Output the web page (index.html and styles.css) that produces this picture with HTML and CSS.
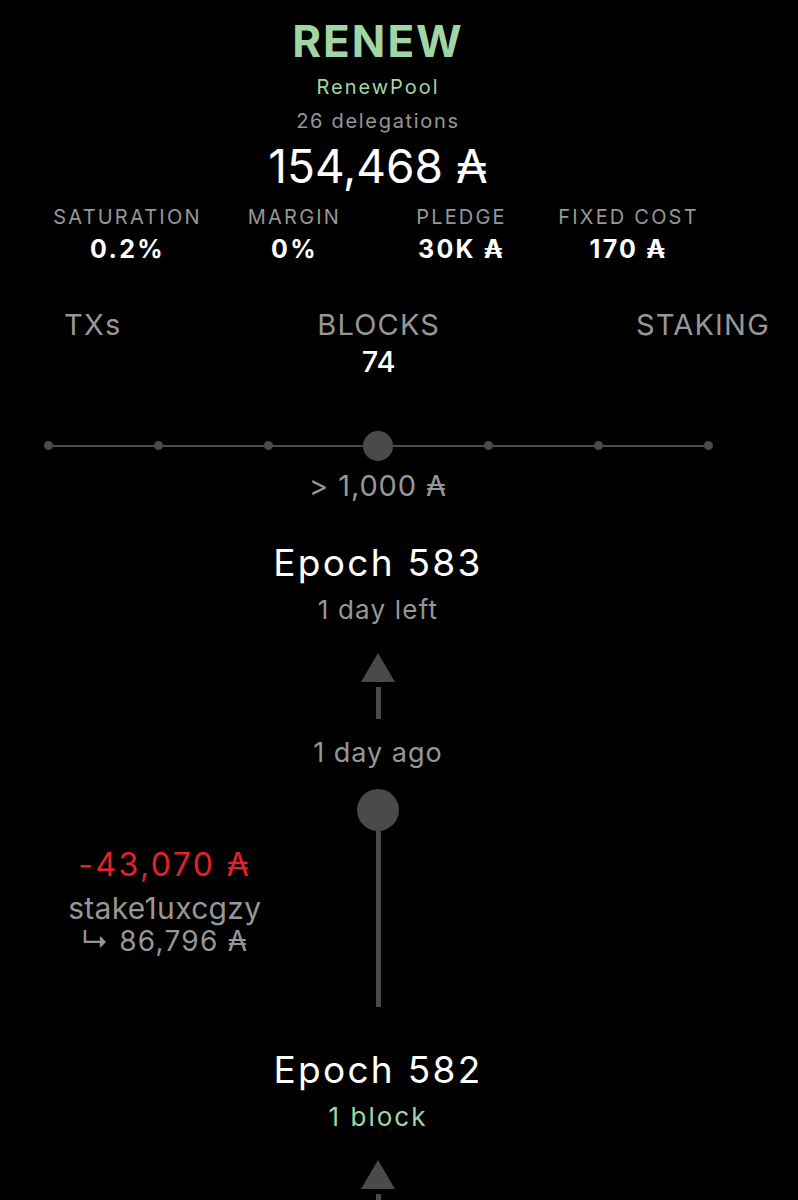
FILE: index.html
```html
<!DOCTYPE html>
<html>
<head>
    <title>RENEW pool</title>
    <link rel="stylesheet" href="styles.css">
</head>
<body>
    <div class="page">
        <header class="pool">
            <h1 class="ticker">RENEW</h1>
            <div class="pool-name">RenewPool</div>
            <div class="delegations">26 delegations</div>
            <div class="stake-total">154,468 ₳</div>

            <div class="stats">
                <div class="stat">
                    <div class="stat-label">SATURATION</div>
                    <div class="stat-value">0.2%</div>
                </div>
                <div class="stat">
                    <div class="stat-label">MARGIN</div>
                    <div class="stat-value">0%</div>
                </div>
                <div class="stat">
                    <div class="stat-label">PLEDGE</div>
                    <div class="stat-value">30K ₳</div>
                </div>
                <div class="stat">
                    <div class="stat-label">FIXED COST</div>
                    <div class="stat-value">170 ₳</div>
                </div>
            </div>
        </header>

        <nav class="tabs">
            <div class="tab">TXs</div>
            <div class="tab">
                BLOCKS
                <span class="tab-count">74</span>
            </div>
            <div class="tab">STAKING</div>
        </nav>

        <!-- amount filter -->
        <div class="slider">
            <span class="stop"></span>
            <span class="stop"></span>
            <span class="stop"></span>
            <span class="stop current"></span>
            <span class="stop"></span>
            <span class="stop"></span>
            <span class="stop"></span>
        </div>
        <div class="threshold">&gt; 1,000 ₳</div>

        <section class="timeline">
            <div class="epoch">
                <div class="epoch-title">Epoch 583</div>
                <div class="epoch-sub">1 day left</div>
            </div>
            <svg class="arrow-head" width="34" height="29" viewBox="0 0 34 29">
                <polygon points="17,0 34,29 0,29"></polygon>
            </svg>
            <div class="stem"></div>
            <div class="ago">1 day ago</div>
            <div class="node"></div>

            <div class="segment">
                <div class="delegation">
                    <div class="delegation-amount">-43,070 ₳</div>
                    <div class="delegation-addr">stake1uxcgzy</div>
                    <div class="delegation-total">↳ 86,796 ₳</div>
                </div>
                <div class="rail"></div>
                <div></div>
            </div>

            <div class="epoch">
                <div class="epoch-title">Epoch 582</div>
                <div class="epoch-sub blocks">1 block</div>
            </div>
            <svg class="arrow-head" width="34" height="29" viewBox="0 0 34 29">
                <polygon points="17,0 34,29 0,29"></polygon>
            </svg>
            <div class="stem"></div>
        </section>
    </div>
</body>
</html>
```

FILE: styles.css
```css
:root {
    --bg: #000000;
    --text: #ffffff;
    --muted: #979797;
    --green: #a0d6a3;
    --red: #e3222a;
    --line: #4a4a4a;
}

body {
    margin: 0;
    background-color: var(--bg);
    color: var(--text);
    font-family: Inter, 'DejaVu Sans', sans-serif;
    line-height: 1.2;
}

.page {
    width: 798px;
    height: 1200px;
    overflow: hidden;
    padding-top: 15px;
    box-sizing: border-box;
}

.pool,
.slider,
.threshold,
.timeline {
    width: 756px;
}

.pool {
    display: flex;
    flex-direction: column;
    align-items: center;
}

.ticker {
    margin: 0;
    font-size: 44px;
    font-weight: 700;
    line-height: 1.2;
    letter-spacing: 2px;
    color: var(--green);
}

.pool-name {
    margin-top: 7px;
    font-size: 20px;
    letter-spacing: 2px;
    color: var(--green);
}

.delegations {
    margin-top: 10px;
    font-size: 20px;
    letter-spacing: 1.7px;
    color: var(--muted);
}

.stake-total {
    margin-top: 6px;
    font-size: 46px;
}

.stats {
    display: grid;
    grid-template-columns: repeat(4, 167px);
    margin-top: 11px;
    text-align: center;
}

.stat-label {
    font-size: 20px;
    letter-spacing: 2.2px;
    color: var(--muted);
}

.stat-value {
    margin-top: 5px;
    font-size: 25px;
    font-weight: 700;
    letter-spacing: 2.3px;
}

.tabs {
    display: flex;
    justify-content: space-between;
    align-items: flex-start;
    margin-top: 44px;
    padding: 0 28px 0 64px;
}

.tab {
    display: flex;
    flex-direction: column;
    align-items: center;
    font-size: 29px;
    letter-spacing: 1.2px;
    color: var(--muted);
}

.tab-count {
    margin-top: 2px;
    color: var(--text);
    font-weight: 500;
    letter-spacing: 0;
}

.slider {
    display: grid;
    grid-template-columns: repeat(7, 110px);
    justify-content: center;
    align-items: center;
    height: 30px;
    margin-top: 51px;
    background: linear-gradient(var(--line), var(--line)) center / 660px 2px no-repeat;
}

.stop {
    justify-self: center;
    width: 9px;
    height: 9px;
    border-radius: 50%;
    background-color: var(--line);
}

.stop.current {
    width: 30px;
    height: 30px;
}

.threshold {
    margin-top: 8px;
    font-size: 29px;
    letter-spacing: 0.9px;
    color: var(--muted);
    text-align: center;
}

.timeline {
    display: flex;
    flex-direction: column;
    align-items: center;
    margin-top: 38px;
}

.epoch {
    display: flex;
    flex-direction: column;
    align-items: center;
}

.epoch + .arrow-head {
    margin-top: 28px;
}

.epoch-title {
    font-size: 37px;
    letter-spacing: 2.3px;
}

.epoch-sub {
    margin-top: 8px;
    font-size: 26px;
    letter-spacing: 1.2px;
    color: var(--muted);
}

.epoch-sub.blocks {
    letter-spacing: 2px;
    color: var(--green);
}

.arrow-head {
    display: block;
    fill: var(--line);
}

.stem {
    width: 5px;
    height: 32px;
    margin-top: 5px;
    background-color: var(--line);
}

.ago {
    margin-top: 18px;
    font-size: 27px;
    letter-spacing: 1px;
    color: var(--muted);
}

.node {
    width: 42px;
    height: 42px;
    margin-top: 20px;
    border-radius: 50%;
    background-color: var(--line);
}

.segment {
    display: grid;
    grid-template-columns: 1fr 5px 1fr;
    width: 100%;
    height: 176px;
    margin-bottom: 41px;
}

.rail {
    background-color: var(--line);
}

.delegation {
    padding: 15px 46px 0 0;
    text-align: center;
}

.delegation-amount {
    font-size: 32px;
    line-height: 38px;
    letter-spacing: 2.4px;
    color: var(--red);
}

.delegation-addr {
    margin-top: 8px;
    font-size: 30px;
    line-height: 32px;
    letter-spacing: 0.3px;
    color: var(--muted);
}

.delegation-total {
    margin-top: 2px;
    font-size: 28px;
    line-height: 30px;
    letter-spacing: 1.3px;
    color: var(--muted);
}
```
